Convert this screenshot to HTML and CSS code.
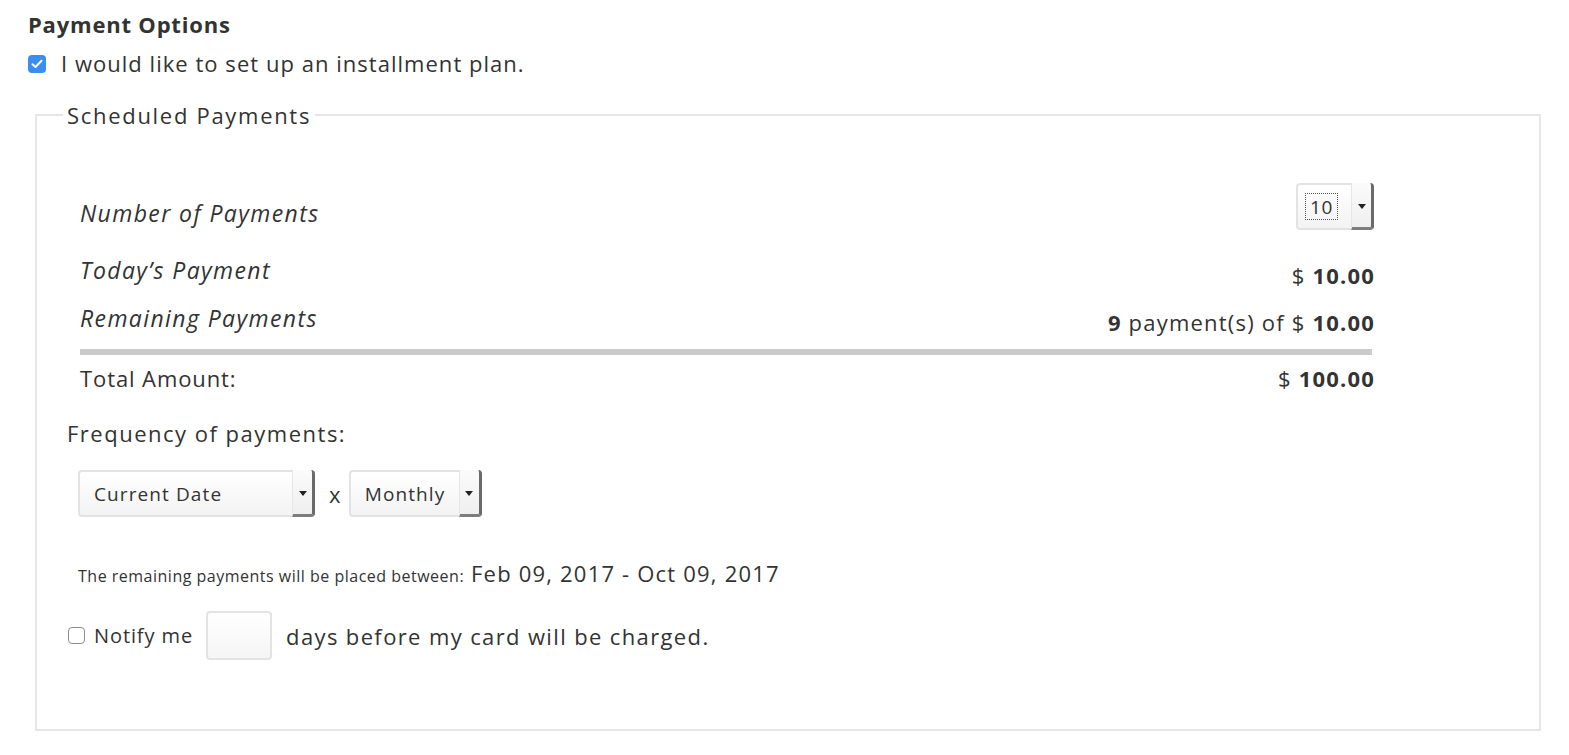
FILE: index.html
```html
<!DOCTYPE html>
<html>
<head>
<meta charset="utf-8">
<link rel="stylesheet" href="styles.css">
</head>
<body>
<h3 class="title">Payment Options</h3>
<div class="opt-row">
  <span class="cb cb-on"><svg width="12" height="10" viewBox="0 0 12 10"><path d="M1.5 5.2 L4.5 8 L10.5 1.8" fill="none" stroke="#fff" stroke-width="2" stroke-linecap="round" stroke-linejoin="round"/></svg></span>
  <span class="opt-label">I would like to set up an installment plan.</span>
</div>
<fieldset class="sched">
  <legend class="legend">Scheduled Payments</legend>
  <div class="inner">
    <div class="summary">
      <div class="row row1">
        <span class="lbl">Number of Payments</span>
        <div class="sel sel-num"><span class="sel-text focus">10</span><span class="arrow"><i></i></span></div>
      </div>
      <div class="row row2">
        <span class="lbl">Today’s Payment</span>
        <span class="val">$ <b>10.00</b></span>
      </div>
      <div class="row row3">
        <span class="lbl">Remaining Payments</span>
        <span class="val"><b>9</b> payment(s) of $ <b>10.00</b></span>
      </div>
      <div class="bar"></div>
      <div class="row total">
        <span class="lbl-n">Total Amount:</span>
        <span class="val">$ <b>100.00</b></span>
      </div>
    </div>
    <div class="freq">Frequency of payments:</div>
    <div class="freq-row">
      <div class="sel sel-date"><span class="sel-text">Current Date</span><span class="arrow"><i></i></span></div>
      <span class="times">x</span>
      <div class="sel sel-month"><span class="sel-text">Monthly</span><span class="arrow"><i></i></span></div>
    </div>
    <div class="range"><span class="small">The remaining payments will be placed between:</span> <span class="dates">Feb 09, 2017 - Oct 09, 2017</span></div>
    <div class="notify">
      <span class="cb cb-off"></span>
      <span class="notify-lbl">Notify me</span>
      <span class="days-box"></span>
      <span class="notify-txt">days before my card will be charged.</span>
    </div>
  </div>
</fieldset>
</body>
</html>
```
FILE: styles.css
```css
html, body {
  margin: 0;
  padding: 0;
  background: #fff;
}
body {
  font-family: "Open Sans", "Lato", sans-serif;
  color: #333;
  font-size: 22px;
  line-height: 26px;
  padding: 11px 28px 0 28px;
  letter-spacing: 1.2px;
}
.title {
  margin: 0;
  font-size: 22px;
  line-height: 26px;
  font-weight: 700;
  letter-spacing: 0.8px;
}
.opt-row {
  margin-top: 12px;
  height: 28px;
  display: flex;
  align-items: center;
}
.opt-label {
  margin-left: 15px;
  letter-spacing: 1.03px;
}
.cb {
  box-sizing: border-box;
  width: 18px;
  height: 18px;
  border-radius: 4px;
  display: inline-flex;
  align-items: center;
  justify-content: center;
  flex: none;
}
.cb-on {
  background: #3a8ef3;
  margin-top: 1px;
}
.cb-off {
  border: 1px solid #8e8e8e;
  background: #fff;
  width: 17px;
  height: 17px;
}
.sched {
  margin: 25px 0 0 7px;
  border: 2px solid #e6e6e6;
  padding: 0 0 69px 26px;
  min-width: 0;
}
.legend {
  padding: 0 4px;
  line-height: 26px;
  letter-spacing: 1.7px;
}
.inner {
  padding-left: 4px;
}
.summary {
  margin-left: 13px;
  width: 1294px;
  padding-top: 55px;
}
.row {
  display: flex;
  justify-content: space-between;
}
.lbl {
  font-style: italic;
  font-size: 23px;
  letter-spacing: 1.4px;
}
.lbl-n {
  letter-spacing: 0.9px;
}
.row1 {
  align-items: flex-end;
}
.row1 .lbl {
  margin-bottom: 4px;
}
.row2 {
  margin-top: 27px;
  align-items: flex-start;
}
.row3 {
  margin-top: 17px;
  align-items: flex-start;
}
.row2 .val {
  margin-top: 5px;
}
.row3 .val {
  margin-top: 4px;
}
.val {
  margin-right: -1px;
}
.bar {
  margin-top: 14px;
  height: 6px;
  width: 1292px;
  background: #cbcbcb;
}
.total {
  margin-top: 10px;
}
.freq {
  margin-top: 29px;
  letter-spacing: 1.5px;
}
.freq-row {
  margin-top: 24px;
  margin-left: 11px;
  display: flex;
  align-items: center;
}
.sel {
  box-sizing: border-box;
  height: 47px;
  border: 2px solid #e3e3e3;
  border-radius: 4px;
  background: linear-gradient(#ffffff, #f3f3f3);
  display: flex;
  align-items: stretch;
  justify-content: space-between;
  font-size: 19px;
  letter-spacing: 1.1px;
}
.sel-text {
  display: flex;
  align-items: center;
  padding-left: 14px;
}
.sel-num .sel-text {
  font-size: 19px;
  letter-spacing: 0.6px;
  margin: 8px 0 8px 7px;
  padding: 0 4px;
  border: 1px dotted #555;
}
.arrow {
  box-sizing: border-box;
  width: 23px;
  margin-top: -2px;
  margin-bottom: -2px;
  margin-right: -2px;
  border-left: 1px solid #e6e6e6;
  border-right: 3px solid #6a6a6a;
  border-bottom: 3px solid #7d7d7d;
  border-radius: 0 4px 4px 0;
  background: linear-gradient(#fbfbfb, #efefef);
  display: flex;
  align-items: center;
  justify-content: center;
}
.arrow i {
  display: block;
  width: 0;
  height: 0;
  border-left: 4px solid transparent;
  border-right: 4px solid transparent;
  border-top: 5px solid #222;
  margin-top: 2px;
}
.sel-num {
  width: 78px;
}
.sel-date {
  width: 237px;
}
.sel-month {
  width: 133px;
}
.times {
  margin: 0 7px 0 14px;
}
.range {
  margin-top: 43px;
  margin-left: 11px;
}
.small {
  font-size: 16px;
  letter-spacing: 0.5px;
}
.dates {
  letter-spacing: 1.2px;
}
.notify {
  margin-top: 22px;
  margin-left: 1px;
  display: flex;
  align-items: center;
  height: 49px;
}
.notify-lbl {
  margin-left: 9px;
  font-size: 20px;
  letter-spacing: 0.9px;
}
.days-box {
  box-sizing: border-box;
  margin-left: 13px;
  width: 66px;
  height: 49px;
  border: 2px solid #e3e3e3;
  border-radius: 4px;
  background: linear-gradient(#ffffff, #f5f5f5);
}
.notify-txt {
  margin-left: 14px;
  letter-spacing: 1.37px;
}
```
